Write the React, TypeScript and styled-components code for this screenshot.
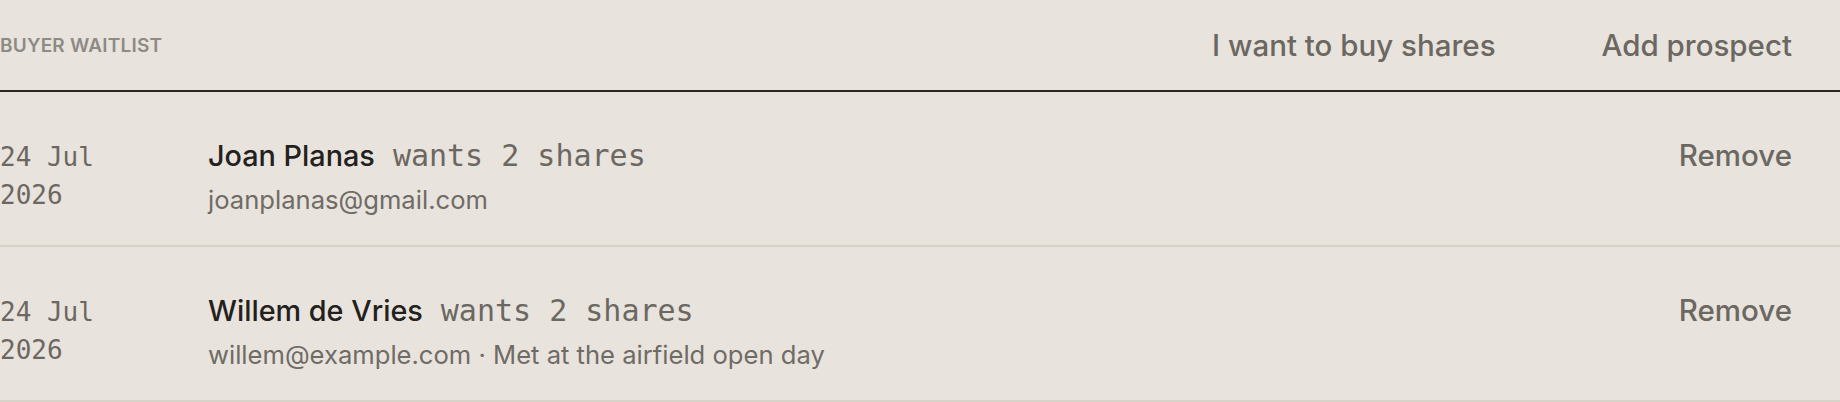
import styled, { createGlobalStyle } from 'styled-components';

const GlobalStyle = createGlobalStyle`
    body {
        margin: 0;
        background: #e8e3dd;
        font-family: Inter, "Noto Sans", sans-serif;
    }
`

const Page = styled.div`
    width: 100%;
`

const Header = styled.div`
    display: flex;
    align-items: center;
    height: 90px;
    border-bottom: 2px solid #2a2622;
`

const Label = styled.div`
    flex: 1;
    font-size: 19px;
    font-weight: 600;
    letter-spacing: 0.2px;
    color: #8e8a84;
    text-transform: uppercase;
`

const Actions = styled.div`
    display: flex;
    align-items: center;
    gap: 10px;
`

const LinkButton = styled.button`
    background: none;
    border: none;
    padding: 0 48px;
    font-family: Inter, "Noto Sans", sans-serif;
    font-size: 29.5px;
    font-weight: 500;
    line-height: 40px;
    color: #6b6761;
    cursor: pointer;
`

const Row = styled.div`
    display: grid;
    grid-template-columns: 208px 1fr auto;
    align-items: baseline;
    padding: 43px 0 27px;
    border-bottom: 2px solid #d8d3c9;
`

const DateCell = styled.div`
    font-family: "DejaVu Sans Mono", "Liberation Mono", monospace;
    font-size: 26px;
    line-height: 38px;
    color: #6b6761;
    width: 100px;
`

const Main = styled.div`
    display: flex;
    flex-direction: column;
`

const TitleLine = styled.div`
    display: flex;
    align-items: baseline;
    gap: 18px;
    line-height: 40px;
`

const Name = styled.span`
    font-size: 28.8px;
    font-weight: 500;
    color: #24211d;
`

const Wants = styled.span`
    font-family: "DejaVu Sans Mono", "Liberation Mono", monospace;
    font-size: 30px;
    color: #6b6761;
`

const Meta = styled.div`
    margin-top: 6px;
    font-size: 25.6px;
    line-height: 36px;
    color: #6f6b65;
`

interface Prospect {
    day: string
    year: string
    name: string
    shares: number
    meta: string
}

const prospects: Prospect[] = [
    { day: '24 Jul', year: '2026', name: 'Joan Planas', shares: 2, meta: 'joanplanas@gmail.com' },
    { day: '24 Jul', year: '2026', name: 'Willem de Vries', shares: 2, meta: 'willem@example.com · Met at the airfield open day' },
]

const App = () => {
    return (
        <Page>
            <GlobalStyle />
            <Header>
                <Label>Buyer waitlist</Label>
                <Actions>
                    <LinkButton>I want to buy shares</LinkButton>
                    <LinkButton>Add prospect</LinkButton>
                </Actions>
            </Header>
            {prospects.map((p, i) => (
                <Row key={i}>
                    <DateCell>{p.day}<br />{p.year}</DateCell>
                    <Main>
                        <TitleLine>
                            <Name>{p.name}</Name>
                            <Wants>wants {p.shares} shares</Wants>
                        </TitleLine>
                        <Meta>{p.meta}</Meta>
                    </Main>
                    <LinkButton>Remove</LinkButton>
                </Row>
            ))}
        </Page>
    )
}

export default App;
